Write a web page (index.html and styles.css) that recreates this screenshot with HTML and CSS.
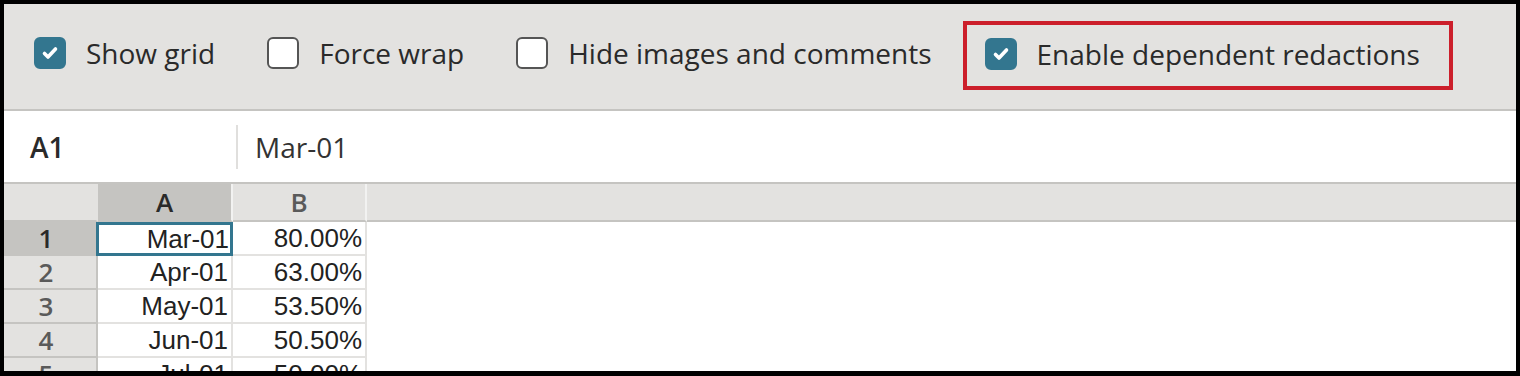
FILE: index.html
```html
<!DOCTYPE html>
<html lang="en">
<head>
  <meta charset="UTF-8">
  <meta name="viewport" content="width=device-width, initial-scale=1">
  <title>Sheet preview</title>
  <link rel="stylesheet" href="styles.css">
</head>

<body>

  <div class="frame">
    <div class="toolbar">
      <label class="option">
        <span class="box checked"><svg viewBox="0 0 28 28"><path d="M8.5 14.5 L12 18 L19.5 10"/></svg></span>
        Show grid
      </label>
      <label class="option">
        <span class="box"></span>
        Force wrap
      </label>
      <label class="option">
        <span class="box"></span>
        Hide images and comments
      </label>
      <div class="highlight">
        <label class="option">
          <span class="box checked"><svg viewBox="0 0 28 28"><path d="M8.5 14.5 L12 18 L19.5 10"/></svg></span>
          Enable dependent redactions
        </label>
      </div>
    </div>

    <div class="formula-bar">
      <div class="cell-ref">A1</div>
      <div class="divider"></div>
      <div class="formula">Mar-01</div>
    </div>

    <div class="sheet">
      <div class="corner"></div>
      <div class="col-head selected">A</div>
      <div class="col-head">B</div>
      <div class="col-head rest"></div>

      <div class="row-head selected">1</div>
      <div class="cell active">Mar-01</div>
      <div class="cell">80.00%</div>
      <div class="cell rest"></div>

      <div class="row-head">2</div>
      <div class="cell">Apr-01</div>
      <div class="cell">63.00%</div>
      <div class="cell rest"></div>

      <div class="row-head">3</div>
      <div class="cell">May-01</div>
      <div class="cell">53.50%</div>
      <div class="cell rest"></div>

      <div class="row-head">4</div>
      <div class="cell">Jun-01</div>
      <div class="cell">50.50%</div>
      <div class="cell rest"></div>

      <div class="row-head">5</div>
      <div class="cell">Jul-01</div>
      <div class="cell">50.00%</div>
      <div class="cell rest"></div>
    </div>
  </div>

</body>
</html>
```

FILE: styles.css
```css
* {
  margin: 0;
  padding: 0;
  box-sizing: border-box;
}

body {
  width: 1520px;
  height: 376px;
  overflow: hidden;
  background: #000;
  font-family: 'Open Sans', sans-serif;
  color: #2a2a2a;
}

.frame {
  width: 1520px;
  height: 376px;
  border: 4px solid #000;
  border-bottom-width: 5px;
  background: #fff;
  overflow: hidden;
}

/* options bar */

.toolbar {
  height: 107px;
  background: #e3e2e0;
  border-bottom: 2px solid #c5c4c1;
  display: flex;
  align-items: center;
  padding-left: 30px;
  padding-bottom: 7px;
}

.option {
  display: flex;
  align-items: center;
  gap: 20px;
  font-size: 28px;
  margin-right: 52px;
  white-space: nowrap;
}

.box {
  width: 32px;
  height: 32px;
  border: 2px solid #555;
  border-radius: 6px;
  background: #fff;
  flex: none;
}

.box.checked {
  background: #33768f;
  border-color: #33768f;
}

.box svg {
  width: 28px;
  height: 28px;
  display: block;
}

.box svg path {
  fill: none;
  stroke: #fff;
  stroke-width: 3.6;
  stroke-linecap: round;
  stroke-linejoin: round;
}

.highlight {
  margin-left: -21px;
  margin-top: 4px;
  border: 4px solid #cc1f2b;
  height: 69px;
  width: 490px;
  padding-left: 18px;
  padding-bottom: 2px;
  display: flex;
  align-items: center;
}

.highlight .option {
  margin-right: 0;
}

/* formula bar */

.formula-bar {
  height: 73px;
  border-bottom: 2px solid #c5c4c1;
  display: flex;
  align-items: center;
  font-size: 28px;
}

.cell-ref {
  width: 232px;
  padding-left: 26px;
  font-weight: 600;
}

.divider {
  width: 2px;
  height: 44px;
  background: #e0dfdd;
}

.formula {
  padding-left: 17px;
  color: #333;
}

/* grid */

.sheet {
  display: grid;
  grid-template-columns: 94px 135px 134px 1fr;
  grid-template-rows: 38px repeat(5, 34px);
}

.corner,
.col-head {
  background: #e3e2e0;
  border-bottom: 2px solid #c5c4c1;
  border-right: 2px solid #f2f2f1;
  font-size: 26px;
  font-weight: 600;
  color: #5a5a5a;
  text-align: center;
  line-height: 36px;
}

.corner {
  border-right-color: #e3e2e0;
}

.col-head.rest {
  border-right: none;
}

.col-head.selected {
  background: #c5c4c1;
  color: #2a2a2a;
}

.row-head {
  background: #e3e2e0;
  border-right: 2px solid #c5c4c1;
  border-bottom: 2px solid #c5c4c1;
  font-size: 26px;
  font-weight: 600;
  color: #5a5a5a;
  text-align: center;
  line-height: 32px;
  padding-right: 8px;
}

.row-head.selected {
  background: #c5c4c1;
  color: #2a2a2a;
}

.cell {
  border-right: 2px solid #e3e2e0;
  border-bottom: 2px solid #e3e2e0;
  font-family: 'Liberation Sans', Arial, sans-serif;
  font-size: 26px;
  color: #222;
  text-align: right;
  line-height: 32px;
  padding-right: 3px;
}

.cell.rest {
  border: none;
}

.cell.active {
  border: 3px solid #33768f;
  margin-left: -2px;
  line-height: 28px;
  padding-right: 1px;
}
```
